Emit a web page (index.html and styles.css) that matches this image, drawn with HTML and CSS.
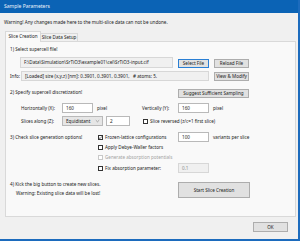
FILE: index.html
```html
<!DOCTYPE html>
<html>
  <head>
    <title>Sample Parameters</title>
    <link rel="stylesheet" href="styles.css">
  </head>
  <body>
    <div class="window">
      <div class="titlebar">Sample Parameters</div>
      <div class="warning">Warning! Any changes made here to the multi-slice data can not be undone.</div>

      <div class="tabs">
        <div class="tab active">Slice Creation</div>
        <div class="tab">Slice Data Setup</div>
      </div>

      <div class="panel">
        <div class="row r-step1">
          <span class="step">1) Select supercell file!</span>
        </div>

        <div class="row r-file">
          <div class="field readonly path">F:\Data\Simulation\SrTiO3\example01\cel\SrTiO3-input.cif</div>
          <button class="btn focus w-sel">Select File</button>
          <button class="btn w-side">Reload File</button>
        </div>

        <div class="row r-info">
          <span class="lbl-info">Info:</span>
          <div class="field readonly info">[Loaded] size (x,y,z) [nm]: 0.3901, 0.3901, 0.3901,&nbsp;&nbsp; # atoms: 5.</div>
          <button class="btn w-side">View &amp; Modify</button>
        </div>

        <div class="row r-step2">
          <span class="step top">2) Specify supercell discretization!</span>
          <button class="btn w-suggest">Suggest Sufficient Sampling</button>
        </div>

        <div class="row r-hv">
          <span class="lbl-sub">Horizontally (X):</span>
          <div class="field w-num">160</div>
          <span class="unit">pixel</span>
          <span class="lbl-vert">Vertically (Y):</span>
          <div class="field w-num">160</div>
          <span class="unit2">pixel</span>
        </div>

        <div class="row r-slices">
          <span class="lbl-sub">Slices along (Z):</span>
          <div class="select">
            <span>Equidistant</span>
            <svg width="5" height="4" viewBox="0 0 5 4"><path d="M0.8 1.2 L2.5 2.8 L4.2 1.2" fill="none" stroke="#666" stroke-width="0.5"/></svg>
          </div>
          <div class="field w-nz">2</div>
          <label class="check c-rev"><span class="box"></span>Slice reversed (z/c=1 first slice)</label>
        </div>

        <div class="row r-step3">
          <span class="step w-step3">3) Check slice generation options!</span>
          <label class="check w-opt"><span class="box"><svg width="5" height="5" viewBox="0 0 5 5"><path d="M0.9 2.6 L2 3.7 L4.1 1.2" fill="none" stroke="#333" stroke-width="0.6"/></svg></span>Frozen-lattice configurations</label>
          <div class="field w-num">100</div>
          <span class="unit2">variants per slice</span>
        </div>

        <div class="row r-opt">
          <label class="check opt"><span class="box"></span>Apply Debye-Waller factors</label>
        </div>

        <div class="row r-opt">
          <label class="check opt disabled"><span class="box"></span>Generate absorption potentials</label>
        </div>

        <div class="row r-fix">
          <label class="check opt w-opt"><span class="box"></span>Fix absorption parameter:</label>
          <div class="field w-num disabled">0.1</div>
        </div>

        <div class="row r-step4">
          <div class="step4-text">
            <div class="step4-a">4) Kick the big button to create new slices.</div>
            <div class="step4-b">Warning: Existing slice data will be lost!</div>
          </div>
          <button class="btn big">Start Slice Creation</button>
        </div>
      </div>

      <div class="footer">
        <button class="btn ok">OK</button>
      </div>
    </div>
  </body>
</html>
```

FILE: styles.css
```css
body {
  margin: 0;
  background: #f0f0f0;
  font-family: "Noto Sans", "Open Sans", sans-serif;
  font-size: 4.6px;
  color: #222;
}
.window {
  width: 298px;
  height: 239px;
  border-right: 2px solid #1c6bbd;
  border-bottom: 2px solid #1c6bbd;
  background: #f0f0f0;
}
.titlebar {
  height: 13px;
  line-height: 13px;
  background: #0b63b5;
  color: #eef4fb;
  padding-left: 4px;
  font-size: 5px;
}
.warning {
  margin-top: 6px;
  height: 6px;
  line-height: 6px;
  padding-left: 4px;
}
.tabs {
  display: flex;
  align-items: flex-end;
  margin-top: 6px;
  padding-left: 5px;
  height: 10px;
}
.tab {
  box-sizing: border-box;
  height: 8px;
  line-height: 7px;
  border: 1px solid #d9d9d9;
  border-bottom: none;
  background: #f0f0f0;
  text-align: center;
  white-space: nowrap;
}
.tab.active {
  width: 36px;
  height: 11px;
  line-height: 9px;
  margin-bottom: -1px;
  background: #f9f9f9;
  position: relative;
  z-index: 1;
}
.tab:not(.active) {
  width: 38px;
  margin-left: -1px;
}
.panel {
  margin-left: 5px;
  width: 291px;
  height: 176px;
  box-sizing: border-box;
  border: 1px solid #d9d9d9;
  background: #f9f9f9;
  padding: 3px 0 0 4px;
}
.row {
  display: flex;
  align-items: center;
  white-space: nowrap;
}
.r-step1 {
  height: 8px;
}
.r-file {
  margin-top: 4px;
  height: 11px;
  align-items: flex-end;
}
.r-info {
  margin-top: 3px;
  height: 10px;
  align-items: flex-end;
}
.r-step2 {
  margin-top: 8px;
  height: 9px;
}
.r-hv {
  margin-top: 5px;
  height: 10px;
}
.r-slices {
  margin-top: 3px;
  height: 10px;
}
.r-step3 {
  margin-top: 6px;
  height: 10px;
}
.r-opt {
  height: 10px;
}
.r-fix {
  margin-top: 1px;
  height: 10px;
}
.r-step4 {
  margin-top: 9px;
  align-items: flex-start;
}
.step.top {
  align-self: flex-start;
  line-height: 6px;
  width: 168px;
}
.field {
  box-sizing: border-box;
  height: 10px;
  line-height: 8px;
  border: 1px solid #b9b9b9;
  background: #ffffff;
  padding-left: 3px;
  overflow: hidden;
}
.field.readonly {
  background: #f0f0f0;
  border-color: #d7d7d7;
}
.field.disabled {
  background: #f0f0f0;
  border-color: #d7d7d7;
  color: #8c8c8c;
}
.path {
  margin-left: 10px;
  width: 153px;
  height: 11px;
  line-height: 9px;
}
.lbl-info {
  width: 11px;
  align-self: center;
}
.info {
  width: 188px;
}
.btn {
  box-sizing: border-box;
  height: 9px;
  border: 1px solid #adadad;
  background: #e1e1e1;
  font-family: inherit;
  font-size: inherit;
  color: #222;
  padding: 0;
  line-height: 7px;
  white-space: nowrap;
}
.btn.focus {
  border-color: #2a7fd4;
}
.w-sel {
  margin-left: 5px;
  width: 31px;
}
.w-side {
  margin-left: 5px;
  width: 35px;
}
.w-suggest {
  width: 71px;
}
.lbl-sub {
  margin-left: 11px;
  width: 41px;
}
.w-num {
  width: 31px;
}
.unit {
  margin-left: 4px;
  width: 45px;
}
.lbl-vert {
  width: 36px;
}
.unit2 {
  margin-left: 4px;
}
.select {
  box-sizing: border-box;
  width: 41px;
  height: 10px;
  border: 1px solid #b9b9b9;
  background: #e6e6e6;
  display: flex;
  align-items: center;
  justify-content: space-between;
  padding: 0 2px 0 3px;
}
.w-nz {
  margin-left: 3px;
  width: 24px;
}
.check {
  display: flex;
  align-items: center;
}
.box {
  box-sizing: border-box;
  width: 5px;
  height: 5px;
  border: 1px solid #333;
  background: #fff;
  margin-right: 2px;
  display: flex;
  align-items: center;
  justify-content: center;
}
.box svg {
  flex: none;
}
.c-rev {
  margin-left: 13px;
}
.w-step3 {
  width: 88px;
}
.w-opt {
  width: 80px;
}
.opt {
  margin-left: 88px;
}
.check.disabled {
  color: #a3a3a3;
}
.check.disabled .box {
  border-color: #c8c8c8;
}
.step4-text {
  width: 168px;
}
.step4-a {
  line-height: 5px;
}
.step4-b {
  margin-top: 4px;
  line-height: 5px;
  padding-left: 6px;
}
.big {
  width: 72px;
  height: 16px;
  line-height: 14px;
}
.footer {
  padding-left: 253px;
  margin-top: 5px;
}
.ok {
  width: 35px;
  height: 10px;
  line-height: 8px;
}
```
